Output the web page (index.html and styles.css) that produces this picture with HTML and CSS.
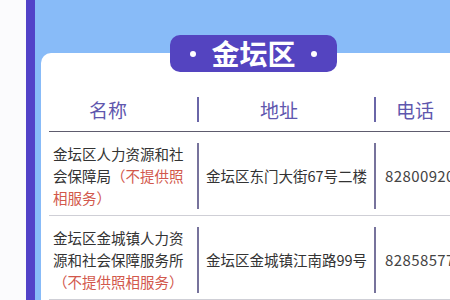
FILE: index.html
```html
<!DOCTYPE html>
<html lang="zh-CN">
<head>
<meta charset="utf-8">
<link rel="stylesheet" href="styles.css">
</head>
<body>
<div class="gutter"></div>
<div class="strip"></div>
<div class="panel">
  <div class="card">
    <div class="pill-wrap">
      <div class="pill"><span class="dot"></span><span class="pill-text">金坛区</span><span class="dot"></span></div>
    </div>
    <div class="thead">
      <div class="th th-name">名称</div>
      <div class="th th-addr">地址</div>
      <div class="th th-tel">电话</div>
    </div>
    <div class="row">
      <div class="cell cell-name">金坛区人力资源和社会保障局<span class="note">（不提供照相服务）</span></div>
      <div class="cell cell-addr">金坛区东门大街67号二楼</div>
      <div class="cell cell-tel">82800920</div>
    </div>
    <div class="row">
      <div class="cell cell-name">金坛区金城镇人力资源和社会保障服务所<span class="note">（不提供照相服务）</span></div>
      <div class="cell cell-addr">金坛区金城镇江南路99号</div>
      <div class="cell cell-tel">82858577</div>
    </div>
  </div>
</div>
</body>
</html>
```
FILE: styles.css
```css
html, body {
  margin: 0;
  padding: 0;
}
body {
  width: 450px;
  height: 300px;
  overflow: hidden;
  display: flex;
  background: #ffffff;
  font-family: "Noto Sans CJK SC", "Noto Sans", sans-serif;
  text-spacing-trim: space-all;
}
.gutter {
  width: 26px;
  flex: none;
  background: #fbfbfd;
}
.strip {
  width: 9px;
  flex: none;
  background: #5242c8;
}
.panel {
  flex: 1;
  min-width: 0;
  background: #88bbf8;
  padding: 53px 0 0 6px;
  display: flex;
}
.card {
  width: 425px;
  flex: none;
  background: #ffffff;
  border-radius: 10px 10px 0 0;
}
.pill-wrap {
  display: flex;
  justify-content: center;
  margin-top: -18px;
}
.pill {
  height: 37px;
  display: flex;
  align-items: center;
  gap: 15px;
  padding: 0 20px;
  background: #5444c0;
  border-radius: 10px;
  color: #ffffff;
}
.dot {
  width: 6px;
  height: 6px;
  border-radius: 50%;
  background: #ffffff;
}
.pill-text {
  font-size: 28px;
  font-weight: 700;
  line-height: 37px;
}
.thead {
  margin-left: 8px;
  display: grid;
  grid-template-columns: 148px 177px 1fr;
  padding: 25px 0 9px;
  border-bottom: 1.5px solid #5e5c6e;
}
.th {
  height: 25px;
  line-height: 25px;
  font-size: 19px;
  color: #5f57ae;
}
.th-name {
  padding-left: 40px;
}
.th-addr {
  border-left: 2px solid #6a66a8;
  padding-left: 61px;
}
.th-tel {
  border-left: 2px solid #6a66a8;
  padding-left: 20px;
}
.row {
  margin-left: 8px;
  display: grid;
  grid-template-columns: 148px 177px 1fr;
  padding: 11px 0 6px;
  border-bottom: 1px solid #cfcfd6;
}
.cell {
  font-size: 14.5px;
  line-height: 22px;
  color: #333333;
}
.cell-name {
  padding: 0 10px 0 4px;
}
.note {
  color: #d2584c;
}
.cell-addr {
  border-left: 2px solid #77739c;
  display: flex;
  align-items: center;
  justify-content: center;
  white-space: nowrap;
}
.cell-tel {
  border-left: 2px solid #77739c;
  padding-left: 9px;
  display: flex;
  align-items: center;
  white-space: nowrap;
  font-size: 15px;
  letter-spacing: 0.4px;
  color: #444444;
}
```
